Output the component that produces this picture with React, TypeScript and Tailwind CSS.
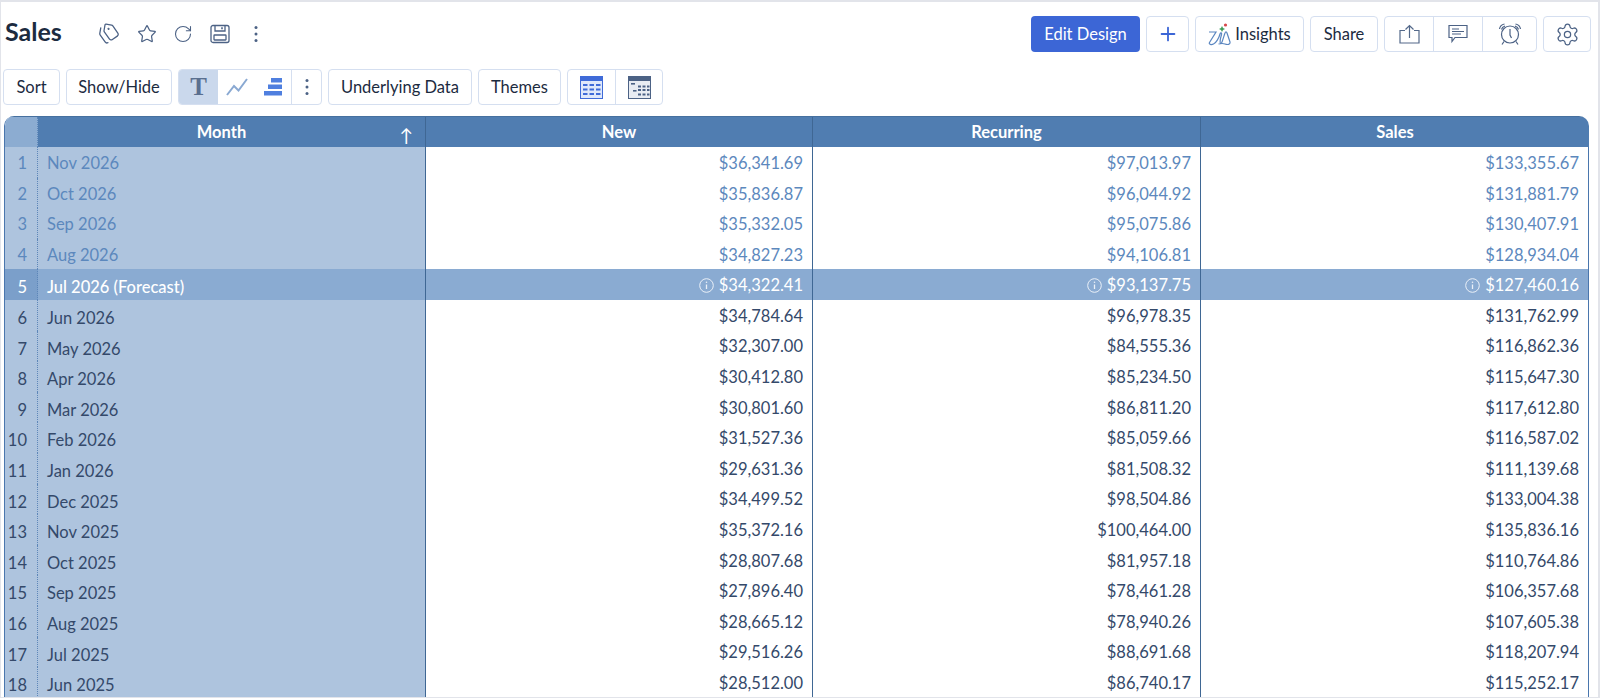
import React from "react";
import { Star, Tags, RotateCw, Settings, Plus } from "lucide-react";

const rows = [
  ["Nov 2026", "$36,341.69", "$97,013.97", "$133,355.67"],
  ["Oct 2026", "$35,836.87", "$96,044.92", "$131,881.79"],
  ["Sep 2026", "$35,332.05", "$95,075.86", "$130,407.91"],
  ["Aug 2026", "$34,827.23", "$94,106.81", "$128,934.04"],
  ["Jul 2026 (Forecast)", "$34,322.41", "$93,137.75", "$127,460.16"],
  ["Jun 2026", "$34,784.64", "$96,978.35", "$131,762.99"],
  ["May 2026", "$32,307.00", "$84,555.36", "$116,862.36"],
  ["Apr 2026", "$30,412.80", "$85,234.50", "$115,647.30"],
  ["Mar 2026", "$30,801.60", "$86,811.20", "$117,612.80"],
  ["Feb 2026", "$31,527.36", "$85,059.66", "$116,587.02"],
  ["Jan 2026", "$29,631.36", "$81,508.32", "$111,139.68"],
  ["Dec 2025", "$34,499.52", "$98,504.86", "$133,004.38"],
  ["Nov 2025", "$35,372.16", "$100,464.00", "$135,836.16"],
  ["Oct 2025", "$28,807.68", "$81,957.18", "$110,764.86"],
  ["Sep 2025", "$27,896.40", "$78,461.28", "$106,357.68"],
  ["Aug 2025", "$28,665.12", "$78,940.26", "$107,605.38"],
  ["Jul 2025", "$29,516.26", "$88,691.68", "$118,207.94"],
  ["Jun 2025", "$28,512.00", "$86,740.17", "$115,252.17"],
];

const btn =
  "flex h-9 items-center justify-center rounded-[4px] border border-[#d5dff0] bg-white text-[16.5px] text-[#1c2b3f]";

const Dots = () => (
  <svg width="4" height="18" viewBox="0 0 4 18" fill="#4c6285">
    <circle cx="2" cy="2.5" r="1.5" />
    <circle cx="2" cy="9" r="1.5" />
    <circle cx="2" cy="15.5" r="1.5" />
  </svg>
);

const SaveIcon = () => (
  <svg width="20" height="20" viewBox="0 0 20 20" fill="none" stroke="#4c6285" strokeWidth="1.3">
    <rect x="1" y="1.5" width="18" height="17" rx="2" />
    <path d="M5 1.5v5.5h10V1.5" />
    <path d="M12 3.2v2" strokeWidth="1.6" />
    <rect x="4" y="11" width="12" height="5" rx="0.5" />
  </svg>
);

const LineIcon = () => (
  <svg width="24" height="20" viewBox="0 0 24 20" fill="none" stroke="#8aa9d2" strokeWidth="2">
    <path d="M2 18 L9 9 L13.5 13.5 L22 2" />
  </svg>
);

const BarsIcon = () => (
  <svg width="20" height="18" viewBox="0 0 20 18" fill="#4f7fdf">
    <rect x="8" y="0" width="11" height="4.5" />
    <rect x="5" y="6.5" width="14" height="4.5" />
    <rect x="1" y="13" width="18" height="4.5" />
  </svg>
);

const TableIcon = () => (
  <svg width="23" height="23" viewBox="0 0 23 23">
    <rect x="0.5" y="0.5" width="22" height="22" fill="#dfe8fa" stroke="#3f6bd8" />
    <rect x="0" y="0" width="23" height="5" fill="#3f6bd8" />
    <g fill="#3f6bd8">
      <rect x="3" y="8" width="4.5" height="2" />
      <rect x="9.5" y="8" width="4.5" height="2" />
      <rect x="16" y="8" width="4.5" height="2" />
      <rect x="3" y="12.5" width="4.5" height="2" />
      <rect x="9.5" y="12.5" width="4.5" height="2" />
      <rect x="16" y="12.5" width="4.5" height="2" />
      <rect x="3" y="17" width="4.5" height="2" />
      <rect x="9.5" y="17" width="4.5" height="2" />
      <rect x="16" y="17" width="4.5" height="2" />
    </g>
  </svg>
);

const PivotIcon = () => (
  <svg width="23" height="23" viewBox="0 0 23 23">
    <rect x="0.5" y="0.5" width="22" height="22" fill="#e8ecf2" stroke="#4c6285" />
    <rect x="0" y="0" width="23" height="5" fill="#4c6285" />
    <g fill="#4c6285">
      <rect x="3" y="7" width="4" height="1.6" />
      <rect x="5" y="14" width="3.5" height="1.6" />
      <rect x="10" y="9.5" width="3" height="2" />
      <rect x="14.5" y="9.5" width="3" height="2" />
      <rect x="19" y="9.5" width="2.5" height="2" />
      <rect x="10" y="13" width="3" height="2" />
      <rect x="14.5" y="13" width="3" height="2" />
      <rect x="19" y="13" width="2.5" height="2" />
      <rect x="10" y="17.5" width="3" height="2" />
      <rect x="14.5" y="17.5" width="3" height="2" />
      <rect x="19" y="17.5" width="2.5" height="2" />
    </g>
  </svg>
);

const InsightsIcon = () => (
  <svg width="23" height="23" viewBox="0 0 23 23" fill="none">
    <path
      d="M1 9 H8 L1.5 19.5 C0.5 21.5 3.5 22 5.5 21 C8 20 11 15 12 11 C12.5 9.5 14 9.5 13.5 11.5 C12.5 15 11.5 19 12.5 20.5 C14 21 15.5 14 17 10 C17.5 8.5 18.5 8.5 19 10 L22 19 C22.5 21.5 19.5 22 17 21 C15 20.2 12.5 20.5 10.5 21"
      stroke="#5a86c0"
      strokeWidth="1.2"
    />
    <path d="M14 3 L15 5 L17 6 L15 7 L14 9 L13 7 L11 6 L13 5 Z" fill="#3f9c5a" />
    <circle cx="17.5" cy="2" r="1.6" fill="#d8474b" />
  </svg>
);

const UploadIcon = () => (
  <svg width="21" height="20" viewBox="0 0 21 20" fill="none" stroke="#54698a" strokeWidth="1.2">
    <path d="M6 6.5H1v12.5h19V6.5h-5" />
    <path d="M10.5 14V1.5M6.5 5.5l4-4 4 4" />
  </svg>
);

const CommentIcon = () => (
  <svg width="20" height="20" viewBox="0 0 20 20" fill="none" stroke="#4c6285" strokeWidth="1.2">
    <path d="M1 1.5h18v12H7l-3 4v-4H1z" />
    <path d="M4 5h7M4 7.5h12M4 10h9" />
  </svg>
);

const AlarmIcon = () => (
  <svg width="24" height="24" viewBox="0 0 24 24" fill="none" stroke="#4c6285" strokeWidth="1.2">
    <circle cx="12" cy="12.5" r="8.5" />
    <path d="M12 7v6l1.5 3" />
    <path d="M1.5 7 C2 4 4 2.5 6.5 2M3.5 7.5 C4 5.5 5 4.8 7 4M22.5 7 C22 4 20 2.5 17.5 2M20.5 7.5 C20 5.5 19 4.8 17 4" />
    <path d="M6 19.5l-2 3M18 19.5l2 3" />
  </svg>
);

const InfoIcon = () => (
  <svg width="15" height="15" viewBox="0 0 15 15" fill="none" stroke="#eaf0f8" strokeWidth="1">
    <circle cx="7.5" cy="7.5" r="6.8" />
    <path d="M7.5 6.5v4.5" strokeWidth="1.3" />
    <circle cx="7.5" cy="4.2" r="0.8" fill="#eaf0f8" stroke="none" />
  </svg>
);

export default function App() {
  return (
    <div className="h-[698px] w-[1600px] overflow-hidden border-t-2 border-r-2 border-b border-l border-[#e2e4ea] bg-white font-['Lato','Carlito','Open_Sans',sans-serif] text-[16.5px]">
      {/* title bar */}
      <div className="flex h-[50px] items-start justify-between pt-[14px] pr-[7px] pl-1">
        <div className="flex items-center">
          <h1 className="w-[93px] text-[25px] leading-[30px] font-bold text-[#1c2b3f]">Sales</h1>
          <div className="flex items-center gap-[16.5px] pt-[6px] text-[#4c6285]">
            <Tags className="h-[22px] w-[22px] rotate-[10deg]" strokeWidth={1.4} />
            <Star className="h-5 w-5" strokeWidth={1.5} />
            <RotateCw className="h-5 w-5" strokeWidth={1.3} />
            <SaveIcon />
            <span className="ml-2 flex"><Dots /></span>
          </div>
        </div>
        <div className="flex gap-[6px]">
          <button className="flex h-9 w-[109px] items-center justify-center rounded-[4px] bg-[#3c66d6] text-[16.5px] text-white">
            Edit Design
          </button>
          <button className={`${btn} w-[43px] text-[#3c66d6]`}>
            <Plus className="h-[22px] w-[22px]" strokeWidth={2} />
          </button>
          <button className={`${btn} w-[109px] gap-[4px]`}>
            <InsightsIcon />
            Insights
          </button>
          <button className={`${btn} w-[68px]`}>Share</button>
          <div className={`${btn} w-[153px]`}>
            <span className="flex h-full w-[49px] items-center justify-center border-r border-[#d5dff0]">
              <UploadIcon />
            </span>
            <span className="flex h-full w-[49px] items-center justify-center border-r border-[#d5dff0]">
              <CommentIcon />
            </span>
            <span className="flex h-full flex-1 items-center justify-center">
              <AlarmIcon />
            </span>
          </div>
          <button className={`${btn} w-[48px] text-[#4c6285]`}>
            <Settings className="h-[25px] w-[25px]" strokeWidth={1.2} />
          </button>
        </div>
      </div>

      {/* toolbar */}
      <div className="mt-[17px] flex gap-[6px] pl-[2px]">
        <button className={`${btn} w-[57px]`}>Sort</button>
        <button className={`${btn} w-[106px]`}>Show/Hide</button>
        <div className={`${btn} w-[144px] overflow-hidden`}>
          <span className="flex h-full w-[39px] items-center justify-center bg-[#cad8ec] font-['Liberation_Serif',serif] text-[25px] font-bold text-[#5a6f8f]">
            T
          </span>
          <span className="flex h-full w-[37px] items-center justify-center">
            <LineIcon />
          </span>
          <span className="flex h-full w-[37px] items-center justify-center border-r border-[#d5dff0]">
            <BarsIcon />
          </span>
          <span className="flex h-full flex-1 items-center justify-center">
            <Dots />
          </span>
        </div>
        <button className={`${btn} w-[144px]`}>Underlying Data</button>
        <button className={`${btn} w-[83px]`}>Themes</button>
        <div className={`${btn} w-[96px]`}>
          <span className="flex h-full w-12 items-center justify-center border-r border-[#d5dff0]">
            <TableIcon />
          </span>
          <span className="flex h-full flex-1 items-center justify-center">
            <PivotIcon />
          </span>
        </div>
      </div>

      {/* table */}
      <div className="mt-[11px] ml-[3px] w-[1585px] overflow-hidden rounded-t-[10px] border-l border-[#4a76ad]">
        <div className="flex h-[31px] border-t border-[#46709f] text-[16.5px] font-bold text-white">
          <div className="w-[33px] shrink-0 border-r border-dotted border-[#5d86b8] bg-[#8cacd1]" />
          <div className="relative flex w-[388px] items-center justify-center border-r border-[#3f6794] bg-[#507db1] pr-5">
            Month
            <span className="absolute right-[12px] bottom-0 text-[18px] leading-[24px] font-normal">↑</span>
          </div>
          <div className="flex w-[387px] items-center justify-center border-r border-[#3f6794] bg-[#507db1]">New</div>
          <div className="flex w-[388px] items-center justify-center border-r border-[#3f6794] bg-[#507db1]">Recurring</div>
          <div className="flex flex-1 items-center justify-center bg-[#507db1]">Sales</div>
        </div>
        {rows.map((row, i) => {
          const forecast = i === 4;
          const future = i < 4;
          const textColor = forecast ? "text-white" : future ? "text-[#5c88bd]" : "text-[#34496a]";
          // rows from the forecast down sit a little lower in the reference
          const labelLeading = i >= 4 ? "leading-[36px]" : "leading-[32px]";
          return (
            <div key={row[0]} className={`flex h-[30.6px] ${textColor}`}>
              <div
                className={`w-[33px] shrink-0 border-r border-dotted border-[#5d86b8] pr-[10px] text-right ${labelLeading} ${
                  forecast ? "bg-[#7b9fca]" : "bg-[#aec4de]"
                }`}
              >
                {i + 1}
              </div>
              <div
                className={`w-[388px] border-r border-[#3f6794] pl-[9px] ${labelLeading} ${
                  forecast ? "bg-[#8aabd2] font-medium" : "bg-[#aec4de]"
                }`}
              >
                {row[0]}
              </div>
              {row.slice(1).map((val, c) => (
                <div
                  key={c}
                  className={`flex items-center justify-end gap-[5px] pt-[2px] pr-[9px] ${
                    c === 0 ? "w-[387px]" : c === 1 ? "w-[388px]" : "flex-1"
                  } ${c < 2 ? "border-r border-[#3f6794]" : "border-r border-[#4a76ad]"} ${
                    forecast ? "bg-[#8aabd2]" : "bg-white"
                  }`}
                >
                  {forecast && <InfoIcon />}
                  {val}
                </div>
              ))}
            </div>
          );
        })}
      </div>
    </div>
  );
}
